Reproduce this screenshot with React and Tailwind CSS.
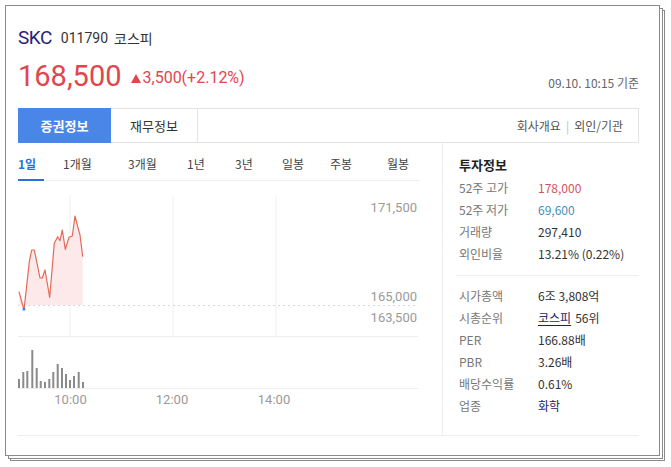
import React from 'react';

const KR = { fontFamily: '"Noto Sans CJK KR", "Noto Sans", sans-serif' };
const RB = { fontFamily: 'Roboto, "Liberation Sans", sans-serif' };

const periods = [
  ['1일', 45],
  ['1개월', 65],
  ['3개월', 59],
  ['1년', 48],
  ['3년', 47],
  ['일봉', 48],
  ['주봉', 57],
  ['월봉', 30],
];

const pricePts = [
  [19, 291.7], [24, 310], [29.3, 261.7], [31.7, 250], [34.3, 250], [40, 278], [42.3, 278],
  [45, 270], [49.7, 297.3], [54.3, 243.3], [57.7, 236.7], [60, 240.7], [62.3, 230],
  [65.3, 249.3], [69, 237.3], [72.3, 236], [75, 216], [77.7, 226.7], [80, 235], [82.7, 256.7],
];

const volBars = [
  [19, 379], [23.3, 372], [27.3, 371], [32.3, 350], [36.7, 368], [40.7, 381], [45, 382],
  [49.3, 379], [53.3, 372], [57.7, 364], [62, 368], [66, 374], [70, 380], [74, 376],
  [78.7, 372], [83, 382],
];

const invest = [
  ['52주 고가', '178,000', 'text-[#d4525c]'],
  ['52주 저가', '69,600', 'text-[#3f8fb8]'],
  ['거래량', '297,410', 'text-[#333]'],
  ['외인비율', '13.21% (0.22%)', 'text-[#333]'],
];

function Chart() {
  const line = pricePts.map((p) => p.join(',')).join(' ');
  const area = `19,305 ${line} 82.7,305`;
  return (
    <svg width="402" height="254" viewBox="18 181 402 254" className="block">
      {[70, 173, 276].map((x) => (
        <line key={x} x1={x} y1="195" x2={x} y2="336" stroke="#f0f0f0" strokeWidth="1" />
      ))}
      <line x1="18" y1="305.5" x2="418" y2="305.5" stroke="#d8d8d8" strokeWidth="1" strokeDasharray="2 3" />
      <line x1="18" y1="336.5" x2="418" y2="336.5" stroke="#eeeeee" strokeWidth="1" />
      <line x1="18" y1="388.5" x2="418" y2="388.5" stroke="#eeeeee" strokeWidth="1" />
      <polygon points={area} fill="#fde9ea" />
      <polyline points={line} fill="none" stroke="#e46a58" strokeWidth="1.2" strokeLinejoin="round" />
      <circle cx="24" cy="309" r="1.6" fill="#4a86e8" />
      {volBars.map(([x, y]) => (
        <rect key={x} x={x - 1} y={y} width="2" height={388 - y} fill="#8a8a8a" />
      ))}
      <g style={RB} fontSize="13" fill="#9a9a9a">
        <text x="417" y="212" textAnchor="end">171,500</text>
        <text x="417" y="301" textAnchor="end">165,000</text>
        <text x="417" y="322" textAnchor="end">163,500</text>
        <text x="70.5" y="404" textAnchor="middle">10:00</text>
        <text x="172" y="404" textAnchor="middle">12:00</text>
        <text x="274" y="404" textAnchor="middle">14:00</text>
      </g>
    </svg>
  );
}

function Row({ label, value, cls }) {
  return (
    <div className="flex h-[22px] items-center text-[12px]">
      <span className="w-[79px] text-[#777]">{label}</span>
      <span className={cls}>{value}</span>
    </div>
  );
}

export default function App() {
  return (
    <div className="min-h-screen bg-white pl-[5px] pt-[5px]" style={KR}>
      <div className="h-[451px] w-[655px] border border-[#8a8a8a] bg-white pl-[12px] pr-[20px] pt-[22px] shadow-[3px_3px_0_-1px_#fff,3px_3px_0_0_#8a8a8a,5px_5px_0_-1px_#fff,5px_5px_0_0_#8a8a8a]">
        {/* title */}
        <div className="flex h-[20px] items-center">
          <span className="text-[19px] leading-[20px] tracking-[-0.5px] text-[#2c1d7c]" style={RB}>SKC</span>
          <span className="ml-[9px] text-[14px] text-[#333]" style={RB}>011790</span>
          <span className="ml-[6px] text-[14px] text-[#333]">코스피</span>
        </div>
        {/* price */}
        <div className="mt-[10px] flex h-[36px] items-center justify-between">
          <div className="flex items-center text-[#e0464f]" style={RB}>
            <span className="text-[29px] leading-[36px]">168,500</span>
            <span className="ml-[9px] mr-[2px] mt-[4px] h-0 w-0 border-x-[5px] border-b-[9px] border-x-transparent border-b-[#e0464f]" />
            <span className="mt-[4px] text-[16px]">3,500(+2.12%)</span>
          </div>
          <span className="self-end mb-[3px] text-[12px] leading-[16px] text-[#666]">09.10. 10:15 기준</span>
        </div>
        {/* tabs */}
        <div className="mt-[14px] flex h-[35px] items-center border border-[#e3e3e3]">
          <div className="-my-px -ml-px flex h-[35px] w-[93px] items-center justify-center bg-[#4a86e8] text-[13px] font-bold text-white">증권정보</div>
          <div className="flex h-full w-[87px] items-center justify-center border-r border-[#e3e3e3] text-[13px] text-[#333]">재무정보</div>
          <div className="ml-auto mr-[15px] flex items-center text-[12px] text-[#555]">
            <span>회사개요</span>
            <span className="mx-[5px] text-[#bbb]">|</span>
            <span>외인/기관</span>
          </div>
        </div>
        {/* body */}
        <div className="flex h-[293px] border-b border-[#eee]">
          <div className="w-[402px]">
            <div className="flex h-[38px] items-center border-b border-[#eee] pt-[5px] text-[12px] text-[#444]">
              {periods.map(([p, w], i) => (
                <div key={p} className="relative h-full shrink-0" style={{ width: w }}>
                  <span className={i === 0 ? 'flex h-full items-center font-bold text-[#2b6fdc]' : 'flex h-full items-center'}>{p}</span>
                  {i === 0 && <span className="absolute -bottom-px left-0 h-[2px] w-[26px] bg-[#2b6fdc]" />}
                </div>
              ))}
            </div>
            <Chart />
          </div>
          <div className="ml-[22px] flex-1 border-l border-[#eee] pl-[13px]">
            <div className="pl-[3px] pt-[14px]">
              <div className="h-[16px] text-[13px] font-bold leading-[16px] text-[#222]">투자정보</div>
              <div className="mt-[4px]">
                {invest.map(([l, v, c]) => (
                  <Row key={l} label={l} value={v} cls={c} />
                ))}
              </div>
            </div>
            <div className="mt-[10px] border-t border-[#eee] pl-[3px] pt-[9px]">
              <Row label="시가총액" value="6조 3,808억" cls="text-[#333]" />
              <div className="flex h-[22px] items-center text-[12px]">
                <span className="w-[79px] text-[#777]">시총순위</span>
                <span className="text-[#1b1a6b] underline underline-offset-2">코스피</span>
                <span className="ml-[4px] text-[#333]">56위</span>
              </div>
              <Row label="PER" value="166.88배" cls="text-[#333]" />
              <Row label="PBR" value="3.26배" cls="text-[#333]" />
              <Row label="배당수익률" value="0.61%" cls="text-[#333]" />
              <Row label="업종" value="화학" cls="text-[#1b1a6b]" />
            </div>
          </div>
        </div>
      </div>
    </div>
  );
}
